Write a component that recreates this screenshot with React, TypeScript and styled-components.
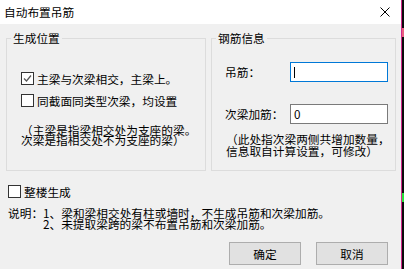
import styled, { createGlobalStyle } from "styled-components";

const GlobalStyle = createGlobalStyle`
  html, body {
    margin: 0;
    padding: 0;
    background: #0b0b0b;
  }
  body {
    font-family: "Noto Sans CJK SC", "Microsoft YaHei", sans-serif;
    font-size: 11.7px;
    color: #000;
  }
`;

const App = () => {
  return (
    <Screen>
      <GlobalStyle />
      <Dialog>
        <TitleBar>
          <Title>自动布置吊筋</Title>
          <CloseIcon width="10" height="10" viewBox="0 0 10 10">
            <path d="M0.5 0.5 L9.5 9.5 M9.5 0.5 L0.5 9.5" stroke="#000" strokeWidth="1" />
          </CloseIcon>
        </TitleBar>
        <Body>
          <GroupRow>
            <Group $w={200}>
              <Legend>生成位置</Legend>
              <CheckList>
                <CheckRow>
                  <Box>
                    <svg width="11" height="11" viewBox="0 0 11 11">
                      <path d="M2 5.5 L4.5 8 L9 2.5" fill="none" stroke="#555" strokeWidth="1.2" />
                    </svg>
                  </Box>
                  <span>主梁与次梁相交，主梁上。</span>
                </CheckRow>
                <CheckRow>
                  <Box />
                  <span>同截面同类型次梁，均设置</span>
                </CheckRow>
              </CheckList>
              <Note $indent={14} $lh={10} $top={18}>
                （主梁是指梁相交处为支座的梁。<br />
                次梁是指相交处不为支座的梁）
              </Note>
            </Group>
            <Group $w={185}>
              <Legend>钢筋信息</Legend>
              <Form>
                <FieldRow>
                  <FieldLabel>吊筋：</FieldLabel>
                  <TextField $focused>
                    <Caret />
                  </TextField>
                </FieldRow>
                <FieldRow>
                  <FieldLabel>次梁加筋：</FieldLabel>
                  <TextField>0</TextField>
                </FieldRow>
              </Form>
              <Note $indent={14} $lh={11.5} $top={9}>
                （此处指次梁两侧共增加数量，<br />
                信息取自计算设置，可修改）
              </Note>
            </Group>
          </GroupRow>
          <WholeRow>
            <Box />
            <span>整楼生成</span>
          </WholeRow>
          <Explain>
            <ExplainLine>说明：1、梁和梁相交处有柱或墙时，不生成吊筋和次梁加筋。</ExplainLine>
            <ExplainLine $indent>2、未提取梁跨的梁不布置吊筋和次梁加筋。</ExplainLine>
          </Explain>
          <ButtonRow>
            <Button>确定</Button>
            <Button>取消</Button>
          </ButtonRow>
        </Body>
      </Dialog>
      <Edge>
        <EdgeMark $top={28} $h={9} $color="#e9607f" />
        <EdgeMark $top={156} $h={9} $color="#27e23b" />
      </Edge>
    </Screen>
  );
};

const Screen = styled.div`
  width: 404px;
  height: 269px;
  display: flex;
  overflow: hidden;
`;

const Dialog = styled.div`
  width: 401px;
  height: 269px;
  display: flex;
  flex-direction: column;
  background: #f0f0f0;
`;

const TitleBar = styled.div`
  height: 24px;
  flex: none;
  display: flex;
  align-items: center;
  justify-content: space-between;
  padding: 0 11px 0 4px;
  background: #fff;
`;

const Title = styled.span`
  font-size: 11.7px;
  line-height: 12px;
  margin-top: -1px;
`;

const CloseIcon = styled.svg`
  display: block;
  margin-top: -1px;
`;

const Body = styled.div`
  flex: 1;
  display: flex;
  flex-direction: column;
  padding: 8px 5px 0 6px;
`;

const GroupRow = styled.div`
  display: flex;
  gap: 5px;
`;

const Group = styled.fieldset<{ $w: number }>`
  width: ${(p) => p.$w}px;
  height: 139px;
  box-sizing: border-box;
  margin: 0;
  padding: 0;
  min-width: 0;
  border: 1px solid #dcdcdc;
`;

const Legend = styled.legend`
  margin-left: 4px;
  padding: 0 2px;
  font-size: 11.7px;
  line-height: 12px;
`;

const CheckList = styled.div`
  display: flex;
  flex-direction: column;
  gap: 9px;
  padding: 28px 0 0 14px;
`;

const CheckRow = styled.div`
  display: flex;
  align-items: center;
  gap: 3px;
  height: 13px;
  line-height: 13px;
  white-space: nowrap;
`;

const Box = styled.span`
  width: 13px;
  height: 13px;
  box-sizing: border-box;
  flex: none;
  border: 1px solid #333;
  background: #fff;
  display: flex;
  align-items: center;
  justify-content: center;
`;

const Note = styled.div<{ $indent: number; $lh: number; $top: number }>`
  padding-left: ${(p) => p.$indent}px;
  margin-top: ${(p) => p.$top}px;
  line-height: ${(p) => p.$lh}px;
  white-space: nowrap;
`;

const Form = styled.div`
  display: flex;
  flex-direction: column;
  gap: 22px;
  padding: 18px 0 0 13px;
`;

const FieldRow = styled.div`
  display: flex;
  align-items: center;
`;

const FieldLabel = styled.span`
  width: 65px;
  flex: none;
  line-height: 20px;
`;

const TextField = styled.div<{ $focused?: boolean }>`
  width: 98px;
  height: 20px;
  box-sizing: border-box;
  border: 1px solid ${(p) => (p.$focused ? "#0078d7" : "#7a7a7a")};
  background: #fff;
  display: flex;
  align-items: center;
  padding-left: 3px;
  line-height: 18px;
`;

const Caret = styled.span`
  width: 1px;
  height: 11px;
  background: #000;
`;

const WholeRow = styled(CheckRow)`
  margin: 14px 0 0 2px;
`;

const Explain = styled.div`
  margin: 10px 0 0 2px;
  line-height: 10.5px;
  white-space: nowrap;
`;

const ExplainLine = styled.div<{ $indent?: boolean }>`
  padding-left: ${(p) => (p.$indent ? 35 : 0)}px;
`;

const ButtonRow = styled.div`
  display: flex;
  justify-content: flex-end;
  gap: 15px;
  margin: 13px 8px 0 0;
`;

const Button = styled.div`
  width: 72px;
  height: 23px;
  box-sizing: border-box;
  border: 1px solid #adadad;
  background: #e1e1e1;
  display: flex;
  align-items: center;
  justify-content: center;
  line-height: 21px;
`;

const Edge = styled.div`
  width: 3px;
  flex: none;
  display: flex;
  flex-direction: column;
  border-left: 1px solid #d0288a;
  box-sizing: border-box;
  background: #0b0b0b;
`;

const EdgeMark = styled.div<{ $top: number; $h: number; $color: string }>`
  margin-top: ${(p) => p.$top}px;
  height: ${(p) => p.$h}px;
  background: ${(p) => p.$color};
`;

export default App;
